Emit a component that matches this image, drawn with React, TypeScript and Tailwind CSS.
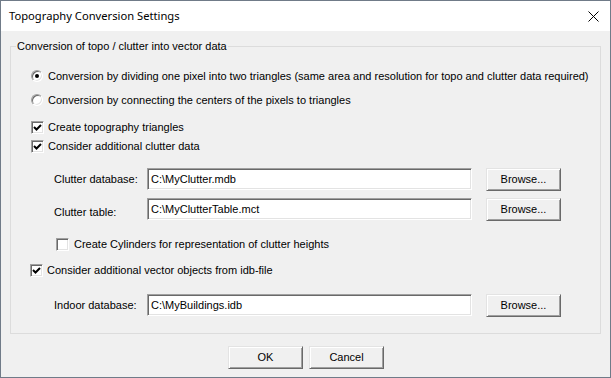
import { ReactNode } from 'react'

const ui = { fontFamily: '"Liberation Sans", Arial, sans-serif' }

function Radio({ checked }: { checked?: boolean }) {
  return (
    <span className="w-[12px] h-[12px] rounded-full border border-t-[#a0a0a0] border-l-[#a0a0a0] border-b-white border-r-white shadow-[inset_1px_1px_0_#696969,inset_-1px_-1px_0_#e3e3e3] bg-white flex items-center justify-center shrink-0">
      {checked && <span className="w-[4px] h-[4px] rounded-full bg-black" />}
    </span>
  )
}

function Check({ checked }: { checked?: boolean }) {
  return (
    <span className="w-[13px] h-[13px] border border-t-[#a0a0a0] border-l-[#a0a0a0] border-b-white border-r-white shadow-[inset_1px_1px_0_#696969,inset_-1px_-1px_0_#e3e3e3] bg-white flex items-center justify-center shrink-0">
      {checked && (
        <svg width="9" height="9" viewBox="0 0 9 9">
          <path d="M1 4 L3.5 6.5 L8 2" stroke="#000" strokeWidth="2" fill="none" />
        </svg>
      )}
    </span>
  )
}

function Button({ children, className = '' }: { children: ReactNode; className?: string }) {
  return (
    <div
      className={`h-[23px] w-[75px] bg-[#f0f0f0] border border-t-[#e3e3e3] border-l-[#e3e3e3] border-b-[#696969] border-r-[#696969] shadow-[inset_1px_1px_0_#ffffff,inset_-1px_-1px_0_#a0a0a0] flex items-center justify-center text-[11px] text-black shrink-0 ${className}`}
    >
      {children}
    </div>
  )
}

function FileRow({ label, value, labelClass = '' }: { label: string; value: string; labelClass?: string }) {
  return (
    <div className="flex items-start h-[22px]">
      <span className={`w-[93px] ml-[38px] leading-[22px] ${labelClass}`}>{label}</span>
      <div className="w-[325px] h-[22px] bg-white border border-t-[#a0a0a0] border-l-[#a0a0a0] border-b-white border-r-white shadow-[inset_1px_1px_0_#696969,inset_-1px_-1px_0_#e3e3e3] flex items-center pl-[3px]">
        {value}
      </div>
      <Button className="ml-[14px]">Browse...</Button>
    </div>
  )
}

export default function App() {
  return (
    <div className="w-[611px] h-[378px] bg-[#f0f0f0] border border-[#707b88] flex flex-col text-[11px] text-black" style={ui}>
      <div className="h-[30px] bg-white flex items-center justify-between shrink-0 pl-[8px] pr-[11px]">
        <span className="text-[11.2px]" style={{ fontFamily: '"Noto Sans", sans-serif' }}>
          Topography Conversion Settings
        </span>
        <svg width="11" height="11" viewBox="0 0 11 11">
          <path d="M0.5 0.5 L10.5 10.5 M10.5 0.5 L0.5 10.5" stroke="#000" strokeWidth="1" />
        </svg>
      </div>

      <fieldset className="mx-[9px] mt-[9px] border border-[#dcdcdc] px-[5px] pb-[17px] flex flex-col">
        <legend className="px-[1px] leading-[13px]">Conversion of topo / clutter into vector data</legend>

        <label className="flex items-center h-[18px] mt-[14px] ml-[15px] gap-[5px]">
          <Radio checked />
          Conversion by dividing one pixel into two triangles (same area and resolution for topo and clutter data required)
        </label>
        <label className="flex items-center h-[18px] mt-[6px] ml-[15px] gap-[5px]">
          <Radio />
          Conversion by connecting the centers of the pixels to triangles
        </label>

        <label className="flex items-center h-[18px] mt-[9px] ml-[15px] gap-[4px]">
          <Check checked />
          Create topography triangles
        </label>
        <label className="flex items-center h-[18px] mt-[1px] ml-[15px] gap-[4px]">
          <Check checked />
          Consider additional clutter data
        </label>

        <div className="mt-[13px]">
          <FileRow label="Clutter database:" value="C:\MyClutter.mdb" />
        </div>
        <div className="mt-[8px]">
          <FileRow label="Clutter table:" value="C:\MyClutterTable.mct" labelClass="pt-[3px]" />
        </div>

        <label className="flex items-center h-[18px] mt-[15px] ml-[40px] gap-[5px]">
          <Check />
          Create Cylinders for representation of clutter heights
        </label>

        <label className="flex items-center h-[18px] mt-[8px] ml-[14px] gap-[4px]">
          <Check checked />
          Consider additional vector objects from idb-file
        </label>

        <div className="mt-[15px]">
          <FileRow label="Indoor database:" value="C:\MyBuildings.idb" />
        </div>
      </fieldset>

      <div className="flex justify-center gap-[6px] mt-[12px] pl-[1px]">
        <Button>OK</Button>
        <Button>Cancel</Button>
      </div>
    </div>
  )
}
